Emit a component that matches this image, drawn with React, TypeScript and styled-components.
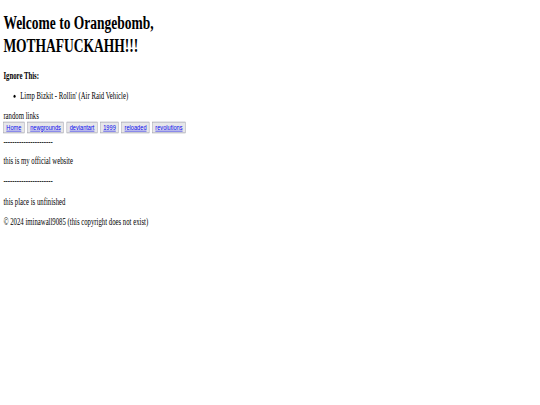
import React from 'react';
import styled, { createGlobalStyle } from 'styled-components';

const GlobalStyle = createGlobalStyle`
  html, body {
    margin: 0;
    padding: 0;
    background: #ffffff;
  }
`;

const Viewport = styled.div`
  width: 540px;
  height: 405px;
  overflow: hidden;
  background: #ffffff;
`;

/* the page was captured wide and squashed down, so lay it out at full size and scale it */
const Page = styled.main`
  width: 1280px;
  box-sizing: border-box;
  padding: 20px 8px 8px;
  transform: scale(0.421875, 0.6);
  transform-origin: 0 0;
  font-family: "Liberation Serif", "Times New Roman", serif;
  font-size: 16px;
  line-height: normal;
  color: #000;
`;

const Title = styled.h1`
  font-size: 32px;
  font-weight: bold;
  margin: 0 0 23px;
`;

const Label = styled.p`
  margin: 0;
  font-weight: bold;
`;

const SongList = styled.ul`
  margin: 16px 0;
  padding-left: 40px;
`;

const Line = styled.div``;

const LinkBar = styled.div`
  display: flex;
  gap: 7px;
  margin-bottom: 5px;
`;

const LinkButton = styled.button`
  font-family: "Liberation Sans", Arial, sans-serif;
  font-size: 13.33px;
  line-height: normal;
  padding: 1px 6px;
  margin: 0;
  background: #e6e6e9;
  border: 1px solid #9a9aa6;
  border-radius: 0;
  cursor: pointer;

  a {
    color: #0000ee;
    text-decoration: underline;
  }
`;

const Para = styled.p<{ $top?: number }>`
  margin: ${({ $top }) => ($top ?? 16)}px 0 16px;
`;

const links = ['Home', 'newgrounds', 'deviantart', '1999', 'reloaded', 'revolutions'];

const dashes = '----------------------';

export default function App() {
  return (
    <Viewport>
      <GlobalStyle />
      <Page>
        <Title>
          Welcome to Orangebomb,
          <br />
          MOTHAFUCKAHH!!!
        </Title>
        <Label>Ignore This:</Label>
        <SongList>
          <li>Limp Bizkit - Rollin' (Air Raid Vehicle)</li>
        </SongList>
        <Line>random links</Line>
        <LinkBar>
          {links.map((l) => (
            <LinkButton key={l}>
              <a href="#">{l}</a>
            </LinkButton>
          ))}
        </LinkBar>
        <Line>{dashes}</Line>
        <Para $top={14}>this is my official website</Para>
        <Para>{dashes}</Para>
        <Para>this place is unfinished</Para>
        <Para>© 2024 iminawall9085 (this copyright does not exist)</Para>
      </Page>
    </Viewport>
  );
}
